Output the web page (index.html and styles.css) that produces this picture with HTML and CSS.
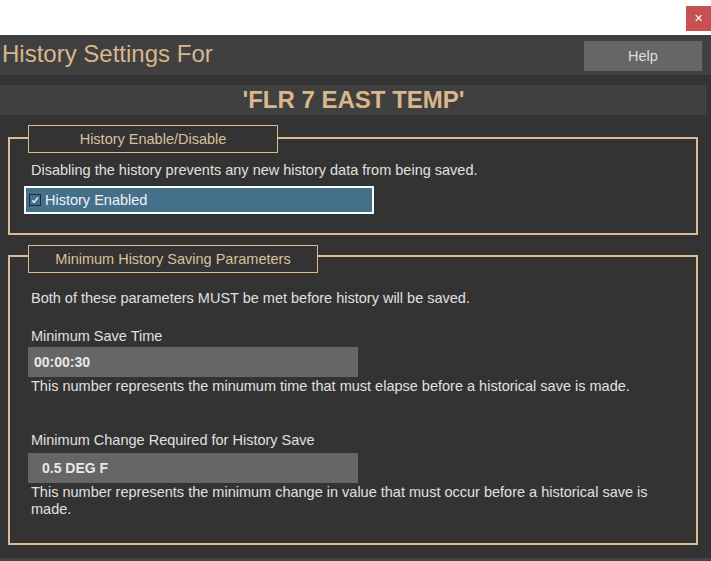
FILE: index.html
```html
<!DOCTYPE html>
<html lang="en">
<head>
<meta charset="utf-8">
<title>History Settings</title>
<link rel="stylesheet" href="styles.css">
</head>
<body>
<div class="topbar"><button class="close" type="button">&#x2715;</button></div>
<header class="header">
  <h1 class="title">History Settings For</h1>
  <button class="help" type="button">Help</button>
</header>
<div class="namebar">'FLR 7 EAST TEMP'</div>

<section class="group group-enable">
  <div class="legend">History Enable/Disable</div>
  <p class="text note">Disabling the history prevents any new history data from being saved.</p>
  <label class="checkrow">
    <span class="checkbox"><svg width="10" height="10" viewBox="0 0 10 10"><path d="M2.2 5.4 L4.1 7.4 L8 2.4" fill="none" stroke="#e6e6e6" stroke-width="1.6"/></svg></span>
    History Enabled
  </label>
</section>

<section class="group group-params">
  <div class="legend legend-params">Minimum History Saving Parameters</div>
  <p class="text intro">Both of these parameters MUST be met before history will be saved.</p>
  <p class="text label">Minimum Save Time</p>
  <div class="field">00:00:30</div>
  <p class="text desc">This number represents the minumum time that must elapse before a historical save is made.</p>
  <p class="text label label-change">Minimum Change Required for History Save</p>
  <div class="field field-change">0.5 DEG F</div>
  <p class="text desc">This number represents the minimum change in value that must occur before a historical save is made.</p>
</section>
<div class="footer"></div>
</body>
</html>
```

FILE: styles.css
```css
html, body {
  margin: 0;
  height: 100%;
  overflow: hidden;
  background: #333333;
}
body {
  font-family: "Liberation Sans", Arial, sans-serif;
  font-size: 14.5px;
  color: #e0e0e0;
}
.topbar {
  height: 35px;
  background: #ffffff;
  display: flex;
  justify-content: flex-end;
  align-items: flex-start;
}
.close {
  margin-top: 6px;
  width: 25px;
  height: 25px;
  padding: 0;
  border: 0;
  background: #c75050;
  color: #ffffff;
  font-family: "DejaVu Sans", sans-serif;
  font-size: 11px;
  font-weight: bold;
}
.header {
  height: 40px;
  background: #404040;
  display: flex;
  align-items: center;
  justify-content: space-between;
}
.title {
  margin: 0 0 2px 2px;
  font-size: 24px;
  font-weight: normal;
  line-height: 28px;
  color: #d9b68c;
}
.help {
  align-self: flex-start;
  margin: 6px 9px 0 0;
  width: 118px;
  height: 30px;
  border: 0;
  background: #666666;
  color: #dddddd;
  font-family: "Liberation Sans", Arial, sans-serif;
  font-size: 14.5px;
}
.namebar {
  margin: 10px 4px 0 0;
  height: 30px;
  background: #404040;
  text-align: center;
  font-weight: bold;
  font-size: 24px;
  line-height: 30px;
  color: #d9b68c;
}
.group {
  margin: 22px 13px 0 8px;
  border: 2px solid #ddbb92;
  padding: 0 0 19px 0;
}
.group-params {
  margin-top: 20px;
  padding-bottom: 25px;
}
.legend {
  box-sizing: border-box;
  width: 250px;
  height: 28px;
  margin: -14px 0 0 18px;
  border: 1px solid #ddbb92;
  background: #333333;
  color: #dcc09c;
  text-align: center;
  line-height: 26px;
}
.legend-params {
  width: 290px;
  margin-top: -12px;
}
.text {
  margin: 0 10px 0 21px;
  line-height: 17px;
}
.note { margin-top: 9px; }
.checkrow {
  box-sizing: border-box;
  display: flex;
  align-items: center;
  width: 350px;
  height: 28px;
  margin: 7px 0 0 14px;
  border: 2px solid #ffffff;
  background: #44708c;
  color: #f2f2f2;
}
.checkbox {
  box-sizing: border-box;
  display: flex;
  align-items: center;
  justify-content: center;
  width: 12px;
  height: 12px;
  margin: 0 4px 1px 3px;
  border: 1px solid #1c2c38;
}
.intro { margin-top: 17px; }
.label { margin-top: 21px; }
.label-change { margin-top: 37px; }
.field {
  box-sizing: border-box;
  width: 330px;
  height: 30px;
  margin: 2px 0 0 18px;
  padding-left: 6px;
  background: #666666;
  color: #e8e8e8;
  font-size: 14px;
  font-weight: bold;
  line-height: 30px;
}
.field-change {
  margin-top: 4px;
  padding-left: 14px;
}
.desc { margin-top: 1px; }
.footer {
  margin-top: 13px;
  height: 20px;
  background: #444444;
}
```
